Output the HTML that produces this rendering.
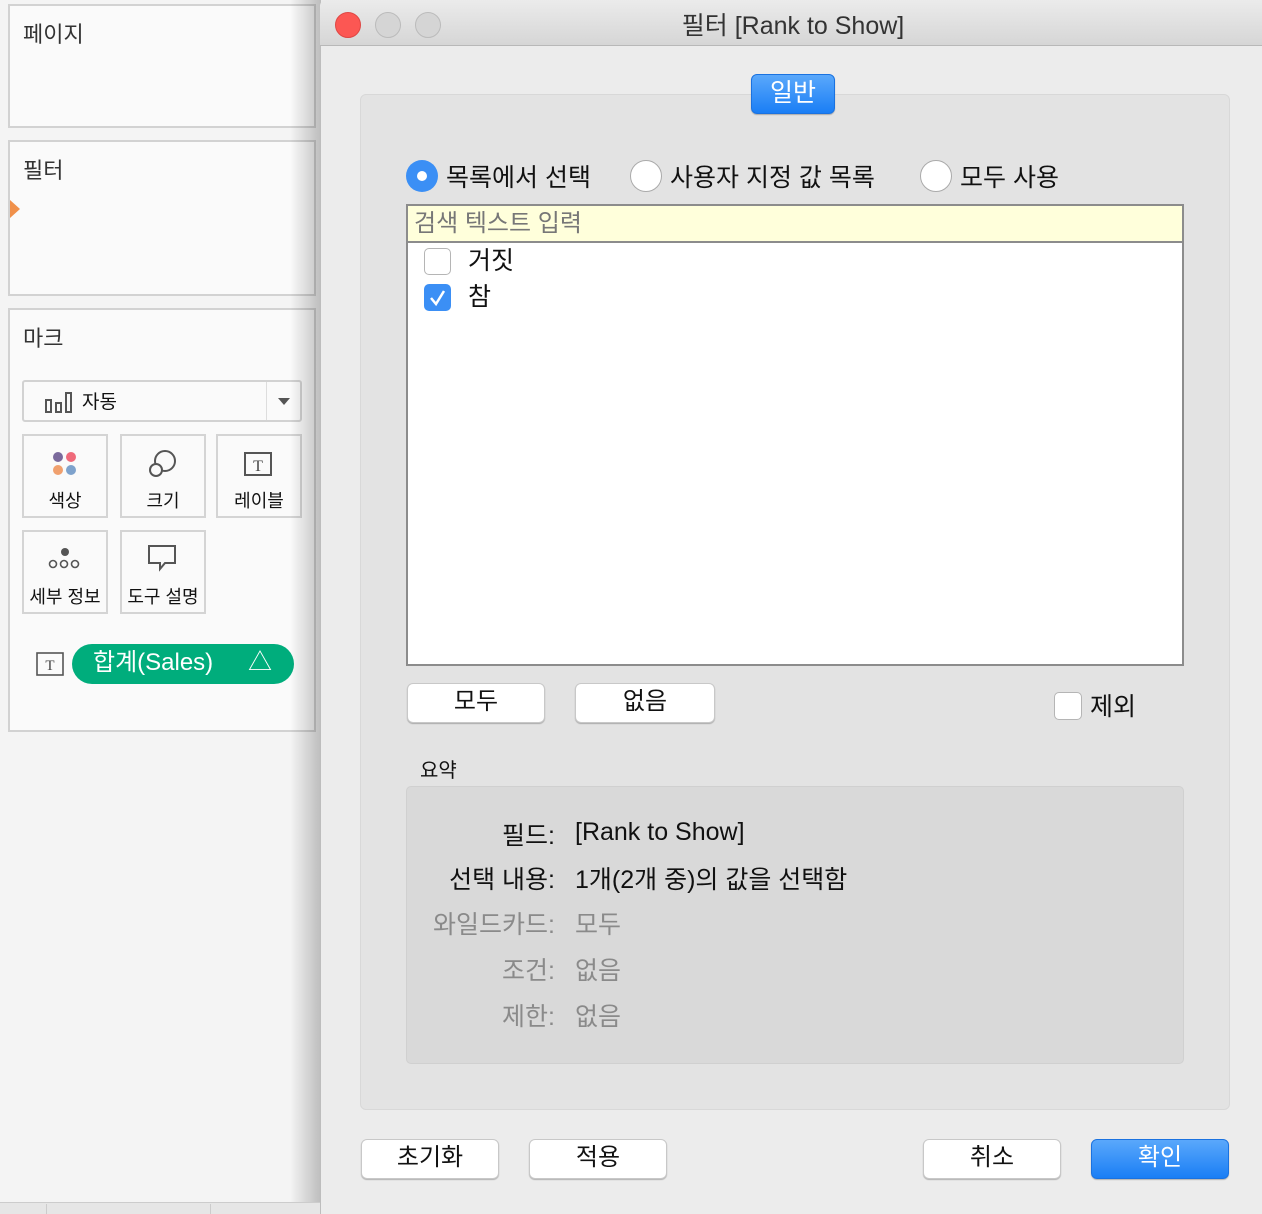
<!DOCTYPE html>
<html><head><meta charset="utf-8"><style>
*{box-sizing:border-box;margin:0;padding:0}
body{width:1262px;height:1214px;position:relative;overflow:hidden;background:#f4f4f4;font-family:"Liberation Sans","Noto Sans CJK KR",sans-serif;color:#111}
.abs{position:absolute}
.card{position:absolute;left:8px;width:308px;background:#fafafa;border:2px solid #d2d2d2}
.card .t{position:absolute;left:13px;font-size:22px;color:#333}
.tile{position:absolute;width:86px;height:84px;border:2px solid #d4d4d4;background:#fafafa;text-align:center;font-size:18px}
.tile span{position:absolute;left:0;right:0;bottom:3px}
.btn{position:absolute;height:40px;background:#fff;border:1px solid #c8c8c8;border-radius:6px;box-shadow:0 1px 1px rgba(0,0,0,.25);text-align:center;font-size:24px;line-height:36px}
.blue{background:linear-gradient(#5aa8fb,#1a7ef5);color:#fff;border-color:#1a72e0}
.row{position:absolute;left:0;width:1262px;height:34px;font-size:25px}
.row .l{position:absolute;right:707px;text-align:right;white-space:nowrap}
.row .v{position:absolute;left:575px;white-space:nowrap}
.g{color:#8a8a8a}
</style></head><body>
<div class="card" style="top:4px;height:124px"><div class="t" style="top:11px">페이지</div></div>
<div class="card" style="top:140px;height:156px"><div class="t" style="top:11px">필터</div>
<div class="abs" style="left:0;top:58px;width:0;height:0;border-top:9px solid transparent;border-bottom:9px solid transparent;border-left:10px solid #f0904a"></div></div>
<div class="card" style="top:308px;height:424px"><div class="t" style="top:11px">마크</div></div>
<div class="abs" style="left:22px;top:380px;width:280px;height:42px;border:2px solid #d2d2d2;border-radius:3px;background:#fafafa">
 <svg class="abs" style="left:20px;top:9px" width="30" height="24"><g fill="none" stroke="#555" stroke-width="2"><rect x="2" y="9" width="5" height="12"/><rect x="12" y="12" width="5" height="9"/><rect x="22" y="2" width="5" height="19"/></g></svg>
 <span class="abs" style="left:58px;top:5px;font-size:19px">자동</span>
 <div class="abs" style="left:242px;top:0;width:1px;height:38px;background:#ddd"></div>
 <div class="abs" style="left:254px;top:16px;border-left:6px solid transparent;border-right:6px solid transparent;border-top:7px solid #555"></div>
</div>
<div class="tile" style="left:22px;top:434px"><svg class="abs" style="left:26px;top:13px" width="30" height="30"><circle cx="8" cy="8" r="5" fill="#7b6a9c"/><circle cx="21" cy="8" r="5" fill="#ef6a7a"/><circle cx="8" cy="21" r="5" fill="#f0a06e"/><circle cx="21" cy="21" r="5" fill="#7ea2cc"/></svg><span>색상</span></div>
<div class="tile" style="left:120px;top:434px"><svg class="abs" style="left:25px;top:12px" width="32" height="32"><g fill="none" stroke="#555" stroke-width="2"><circle cx="18" cy="13" r="10"/><circle cx="9" cy="22" r="6" fill="#fafafa"/></g></svg><span>크기</span></div>
<div class="tile" style="left:216px;top:434px"><svg class="abs" style="left:26px;top:16px" width="30" height="26"><rect x="1" y="1" width="26" height="22" fill="none" stroke="#555" stroke-width="2"/><text x="14" y="19" font-size="16" text-anchor="middle" font-family="Liberation Serif" fill="#444">T</text></svg><span>레이블</span></div>
<div class="tile" style="left:22px;top:530px"><svg class="abs" style="left:23px;top:12px" width="36" height="28"><circle cx="18" cy="8" r="4" fill="#555"/><g fill="none" stroke="#555" stroke-width="1.6"><circle cx="6" cy="20" r="3.5"/><circle cx="17" cy="20" r="3.5"/><circle cx="28" cy="20" r="3.5"/></g></svg><span>세부 정보</span></div>
<div class="tile" style="left:120px;top:530px"><svg class="abs" style="left:25px;top:12px" width="32" height="32"><path d="M2 2H28V19H18L13 25V19H2Z" fill="none" stroke="#555" stroke-width="2"/></svg><span>도구 설명</span></div>
<svg class="abs" style="left:36px;top:652px" width="30" height="26"><rect x="1" y="1" width="26" height="22" fill="none" stroke="#555" stroke-width="1.6"/><text x="14" y="18" font-size="15" text-anchor="middle" font-family="Liberation Serif" fill="#444">T</text></svg>
<div class="abs" style="left:72px;top:644px;width:222px;height:40px;border-radius:20px;background:#00ad7c;color:#fff;font-size:24px;line-height:38px;padding-left:21px">합계(Sales)<span class="abs" style="left:176px;top:0">△</span></div>
<div class="abs" style="left:290px;top:0;width:30px;height:1214px;background:linear-gradient(90deg,rgba(0,0,0,0),rgba(0,0,0,.22))"></div>
<div class="abs" style="left:0;top:1202px;width:320px;height:12px;background:#e6e6e6;border-top:1px solid #ccc"></div>
<div class="abs" style="left:46px;top:1204px;width:1px;height:10px;background:#ccc"></div>
<div class="abs" style="left:210px;top:1204px;width:1px;height:10px;background:#ccc"></div>

<div class="abs" style="left:320px;top:0;width:942px;height:1214px;background:#ececec;border-left:1px solid #bdbdbd"></div>
<div class="abs" style="left:320px;top:0;width:942px;height:46px;background:linear-gradient(#ebebeb,#d6d6d6);border-bottom:1px solid #b8b8b8;border-top-left-radius:6px"></div>
<div class="abs" style="left:335px;top:12px;width:26px;height:26px;border-radius:50%;background:#fc5753;border:1px solid #df4744"></div>
<div class="abs" style="left:375px;top:12px;width:26px;height:26px;border-radius:50%;background:#d5d5d5;border:1px solid #bbb"></div>
<div class="abs" style="left:415px;top:12px;width:26px;height:26px;border-radius:50%;background:#d5d5d5;border:1px solid #bbb"></div>
<div class="abs" style="left:320px;width:942px;top:6px;text-align:center;font-size:25px;color:#333;padding-left:4px">필터 [Rank to Show]</div>

<div class="abs" style="left:360px;top:94px;width:870px;height:1016px;background:#e3e3e3;border:1px solid #d8d8d8;border-radius:6px"></div>
<div class="btn blue" style="left:751px;top:74px;width:84px;font-size:25px">일반</div>

<div class="abs" style="left:406px;top:160px;width:32px;height:32px;border-radius:50%;background:#3b8ff5"><div class="abs" style="left:11px;top:11px;width:10px;height:10px;border-radius:50%;background:#fff"></div></div>
<div class="abs" style="left:446px;top:158px;font-size:25px">목록에서 선택</div>
<div class="abs" style="left:630px;top:160px;width:32px;height:32px;border-radius:50%;background:#fff;border:1px solid #aaa"></div>
<div class="abs" style="left:670px;top:158px;font-size:25px">사용자 지정 값 목록</div>
<div class="abs" style="left:920px;top:160px;width:32px;height:32px;border-radius:50%;background:#fff;border:1px solid #aaa"></div>
<div class="abs" style="left:960px;top:158px;font-size:25px">모두 사용</div>

<div class="abs" style="left:406px;top:204px;width:778px;height:462px;background:#fff;border:2px solid #8c8c8c"></div>
<div class="abs" style="left:408px;top:206px;width:774px;height:37px;background:#ffffdb;border-bottom:2px solid #8c8c8c;font-size:24px;color:#777;padding-left:6px;line-height:36px">검색 텍스트 입력</div>
<div class="abs" style="left:424px;top:248px;width:27px;height:27px;border:1px solid #b5b5b5;border-radius:5px;background:#fff"></div>
<div class="abs" style="left:468px;top:241px;font-size:25px">거짓</div>
<div class="abs" style="left:424px;top:284px;width:27px;height:27px;border-radius:5px;background:#3b8ff5"><svg width="27" height="27"><path d="M7 14L12 20L20 7" fill="none" stroke="#fff" stroke-width="2.5"/></svg></div>
<div class="abs" style="left:468px;top:277px;font-size:25px">참</div>

<div class="btn" style="left:407px;top:683px;width:138px">모두</div>
<div class="btn" style="left:575px;top:683px;width:140px">없음</div>
<div class="abs" style="left:1054px;top:692px;width:28px;height:28px;border:1px solid #b5b5b5;border-radius:5px;background:#fff"></div>
<div class="abs" style="left:1090px;top:687px;font-size:25px">제외</div>

<div class="abs" style="left:420px;top:754px;font-size:20px">요약</div>
<div class="abs" style="left:406px;top:786px;width:778px;height:278px;background:#d9d9d9;border:1px solid #d0d0d0;border-radius:5px"></div>
<div class="row" style="top:816px"><span class="l">필드:</span><span class="v" style="top:2px">[Rank to Show]</span></div>
<div class="row" style="top:860px"><span class="l">선택 내용:</span><span class="v">1개(2개 중)의 값을 선택함</span></div>
<div class="row g" style="top:905px"><span class="l">와일드카드:</span><span class="v">모두</span></div>
<div class="row g" style="top:951px"><span class="l">조건:</span><span class="v">없음</span></div>
<div class="row g" style="top:997px"><span class="l">제한:</span><span class="v">없음</span></div>

<div class="btn" style="left:361px;top:1139px;width:138px">초기화</div>
<div class="btn" style="left:529px;top:1139px;width:138px">적용</div>
<div class="btn" style="left:923px;top:1139px;width:138px">취소</div>
<div class="btn blue" style="left:1091px;top:1139px;width:138px">확인</div>
</body></html>
